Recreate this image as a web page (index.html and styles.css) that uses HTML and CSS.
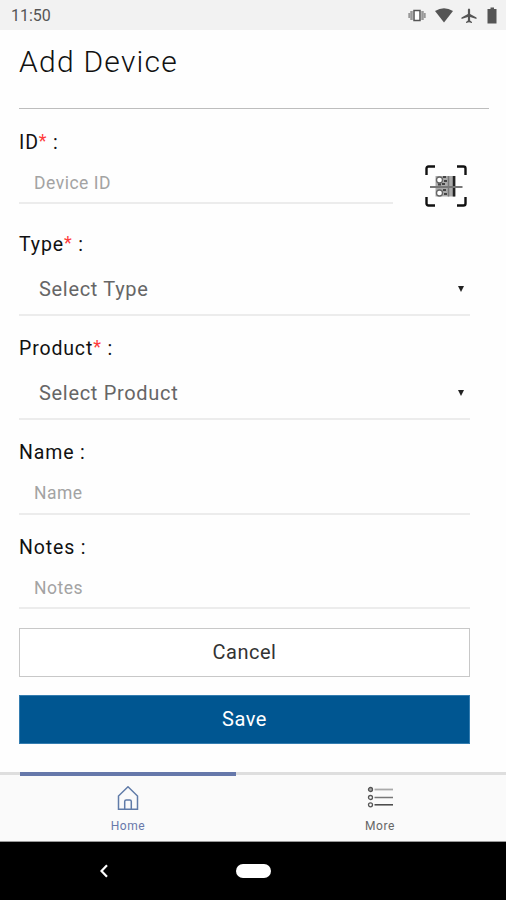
FILE: index.html
```html
<!DOCTYPE html>
<html lang="en">
<head>
<meta charset="utf-8">
<title>Add Device</title>
<link rel="stylesheet" href="styles.css">
</head>
<body>
<header class="status">
  <span class="clock">11:50</span>
  <svg class="status-icons" width="94" height="20" viewBox="0 0 94 20" fill="#555">
    <path d="M8 4.500H14V14.500H8Z" fill="#fff" stroke="#555" stroke-width="1.500"/>
    <path d="M5.500 5V14M16.500 5V14" stroke="#999" stroke-width="2.500"/>
    <path d="M3.300 7V12M18.700 7V12" stroke="#999" stroke-width="2"/>
    <path d="M29 5Q38 -.7 47 5L38 16.500Z"/>
    <path d="M61.900 3.500Q63 1.300 64.100 3.500V8L70.500 11.500V13L64.100 11V14.500L66 16V17L63 16.200L60 17V16L61.900 14.500V11L55.500 13V11.500L61.900 8Z"/>
    <path d="M81.500 3H84.500V1.500H88V3H90.500V17.500H81.500Z"/>
  </svg>
</header>
<main class="page">
  <h1 class="title">Add Device</h1>
  <form class="form">
    <div class="group id-group">
      <div class="id-field">
        <div class="label">ID<span class="req">*</span> :</div>
        <div class="field input id-input"><span>Device ID</span></div>
      </div>
      <svg class="scan" width="44" height="44" viewBox="0 0 44 44" fill="none">
        <path d="M2.500 11V4.500Q2.500 2.500 4.500 2.500H11M33 2.500H39.500Q41.500 2.500 41.500 4.500V11M41.500 33V39.500Q41.500 41.500 39.500 41.500H33M11 41.500H4.500Q2.500 41.500 2.500 39.500V33" stroke="#111" stroke-width="2.400"/>
        <path d="M11.500 12H31.500V32.500H11.500Z" fill="#aaa"/>
        <circle cx="15.500" cy="16" r="3" fill="#fff" stroke="#666" stroke-width="1.300"/>
        <circle cx="15.500" cy="29" r="3" fill="#fff" stroke="#666" stroke-width="1.300"/>
        <path d="M19 13H22M20 17H23M14 20.500H17M18 20H21M19 26H22M20 30H23" stroke="#444" stroke-width="2"/>
        <path d="M24.500 12V32.500" stroke="#777" stroke-width="1.500"/>
        <path d="M30 12V32.500" stroke="#222" stroke-width="2.500"/>
        <path d="M6 23H38.500" stroke="#777" stroke-width="2"/>
      </svg>
    </div>
    <div class="group">
      <div class="label">Type<span class="req">*</span> :</div>
      <div class="field select"><span>Select Type</span><i class="arrow"></i></div>
    </div>
    <div class="group">
      <div class="label">Product<span class="req">*</span> :</div>
      <div class="field select"><span>Select Product</span><i class="arrow"></i></div>
    </div>
    <div class="group">
      <div class="label">Name :</div>
      <div class="field input name-input"><span>Name</span></div>
    </div>
    <div class="group notes-group">
      <div class="label">Notes :</div>
      <div class="field input notes-input"><span>Notes</span></div>
    </div>
    <button type="button" class="button cancel">Cancel</button>
    <button type="button" class="button save">Save</button>
  </form>
</main>
<nav class="tabs">
  <a class="tab active">
    <svg width="24" height="28" viewBox="0 0 24 28" fill="none" stroke="#607ba8" stroke-width="1.500">
      <path d="M2.500 10L12 .8L21.500 10V23.200H2.500ZM8.700 23V15.500Q8.700 14 10.200 14H13.800Q15.300 14 15.300 15.500V23"/>
    </svg>
    <span>Home</span>
  </a>
  <a class="tab more">
    <svg width="28" height="28" viewBox="0 0 28 28" fill="none">
      <path d="M8.500 3.500H27" stroke="#aaa" stroke-width="1.800"/>
      <path d="M8.500 11.500H27" stroke="#777" stroke-width="1.500"/>
      <path d="M8.500 18.800H27" stroke="#444" stroke-width="1.500"/>
      <g stroke="#555" stroke-width="1.300"><circle cx="4.500" cy="3.500" r="2" fill="#aaa"/><circle cx="4.500" cy="11.500" r="2"/><circle cx="4.500" cy="18.800" r="2"/></g>
    </svg>
    <span>More</span>
  </a>
</nav>
<footer class="system">
  <svg class="back" width="10" height="14" viewBox="0 0 10 14" fill="none" stroke="#fff" stroke-width="2.200"><path d="M7 1.200L1.500 7L7 12.800"/></svg>
  <span class="pill"></span>
</footer>
</body>
</html>
```

FILE: styles.css
```css
* { box-sizing: border-box; }
body {
  margin: 0;
  height: 900px;
  display: flex;
  flex-direction: column;
  overflow: hidden;
  background: #fefefe;
  color: #111;
  font-family: Roboto, "Liberation Sans", sans-serif;
}
.status {
  height: 30px;
  padding: 1px 6px 0 11px;
  display: flex;
  align-items: center;
  justify-content: space-between;
  background: #f2f2f2;
}
.clock { font-size: 16px; color: #555; }
.page { height: 742px; padding: 0 36px 0 19px; }
.title {
  margin: 0 -19px 0 0;
  height: 79px;
  padding-top: 14px;
  border-bottom: 1px solid #bdbdbd;
  font-size: 30px;
  line-height: 36px;
  font-weight: 300;
  letter-spacing: 1.25px;
  color: #111;
}
.form {
  padding-top: 21px;
  display: flex;
  flex-direction: column;
}
.group { margin-bottom: 20px; }
.id-group {
  height: 74px;
  margin-bottom: 28px;
  display: flex;
  justify-content: space-between;
}
.notes-group { margin-bottom: 19px; }
.id-field { width: 374px; }
.scan { margin: 34px 2px 0 0; }
.label {
  height: 24px;
  line-height: 25px;
  font-size: 19.5px;
  letter-spacing: 0.85px;
}
.req { color: #ff3b3b; line-height: 1; vertical-align: 2px; font-size: 18px; }
.field {
  display: flex;
  align-items: center;
  border-bottom: 2px solid #ececec;
}
.input {
  padding-left: 15px;
  font-size: 17.5px;
  letter-spacing: 0.5px;
  color: #a3a3a3;
}
.id-input { height: 50px; padding-top: 10px; }
.name-input { height: 51px; padding-top: 9px; }
.notes-input { height: 50px; padding-top: 9px; }
.select {
  height: 60px;
  padding: 7px 6px 0 20px;
  justify-content: space-between;
  font-size: 20px;
  letter-spacing: 0.68px;
  color: #666;
}
.arrow {
  border: 3px solid transparent;
  border-top: 6px solid #222;
  border-bottom: 0;
}
.button {
  height: 49px;
  padding: 0 0 2px;
  font: 20px Roboto, "Liberation Sans", sans-serif;
  letter-spacing: 0.5px;
  border: 1px solid #c8c8c8;
  background: #fff;
  color: #333;
}
.save { margin-top: 18px; background: #005691; border-color: #347db0; color: #fff; }
.tabs {
  height: 70px;
  display: grid;
  grid-template-columns: 234px 252px;
  padding: 0 0 0 20px;
  background: linear-gradient(#dedede 3px, #fafafa 3px);
  border-bottom: 1px solid #999;
}
.tab {
  display: flex;
  flex-direction: column;
  align-items: center;
  padding-top: 10px;
  font-size: 12px;
  line-height: 16px;
  letter-spacing: 0.6px;
  color: #666;
}
.tab span { margin-top: 4px; }
.active { width: 216px; border-top: 4px solid #6678aa; color: #6878aa; }
.more { padding-top: 14px; }
.system {
  height: 58px;
  display: grid;
  grid-template-columns: 136px 35px;
  align-items: center;
  padding-left: 100px;
  background: #000;
}
.pill { height: 14px; border-radius: 7px; background: #fff; }
```
